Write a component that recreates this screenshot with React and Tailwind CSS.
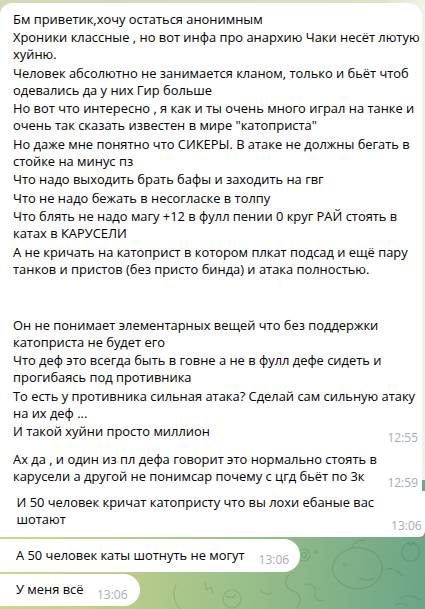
import React from 'react';

const FIRST = [
  ['Бм приветик,хочу остаться анонимным'],
  ['Хроники классные , но вот инфа про анархию Чаки несёт лютую', 'хуйню.'],
  ['Человек абсолютно не занимается кланом, только и бьёт чтоб', 'одевались да у них Гир больше'],
  ['Но вот что интересно , я как и ты очень много играл на танке и', 'очень так сказать известен в мире "катоприста"'],
  ['Но даже мне понятно что СИКЕРЫ. В атаке не должны бегать в', 'стойке на минус пз'],
  ['Что надо выходить брать бафы и заходить на гвг'],
  ['Что не надо бежать в несогласке в толпу'],
  ['Что блять не надо магу +12 в фулл пении 0 круг РАЙ стоять в', 'катах в КАРУСЕЛИ'],
  ['А не кричать на катоприст в котором плкат подсад и ещё пару', 'танков и пристов (без присто бинда) и атака полностью.'],
  [''],
  [''],
  ['Он не понимает элементарных вещей что без поддержки', 'катоприста не будет его'],
  ['Что деф это всегда быть в говне а не в фулл дефе сидеть и', 'прогибаясь под противника'],
  ['То есть у противника сильная атака? Сделай сам сильную атаку', 'на их деф ...'],
  ['И такой хуйни просто миллион'],
];

function Time({ children, className }) {
  return (
    <span className={`shrink-0 whitespace-nowrap text-[12px] leading-[17px] text-[#a3adb8] ${className}`}>
      {children}
    </span>
  );
}

// paragraphs of pre-wrapped lines; the time sits on the last line, pushed right
function Paragraphs({ paras, time, timeClass }) {
  return paras.map((lines, pi) => (
    <div key={pi} className={pi > 0 ? 'mt-[1.55px]' : ''}>
      {lines.map((line, li) => {
        const last = pi === paras.length - 1 && li === lines.length - 1;
        if (last) {
          return (
            <div key={li} className="flex items-start justify-between">
              <span className="h-[17px] whitespace-nowrap leading-[17px]">{line}</span>
              <Time className={timeClass}>{time}</Time>
            </div>
          );
        }
        return (
          <div key={li} className="h-[17px] whitespace-nowrap leading-[17px]">
            {line}
          </div>
        );
      })}
    </div>
  ));
}

function Doodles() {
  return (
    <svg
      className="pointer-events-none absolute inset-0"
      width="425"
      height="609"
      viewBox="0 0 425 609"
      fill="none"
      stroke="rgba(40,80,45,0.16)"
      strokeWidth="1.2"
      strokeLinecap="round"
      strokeLinejoin="round"
    >
      <circle cx="304" cy="555" r="6" />
      <circle cx="304" cy="555" r="2.5" />
      <circle cx="316" cy="552" r="1.2" />
      <path d="M333 565c4-14 22-22 38-14 10 5 14 16 9 26-6 12-25 15-36 8-8-5-13-12-11-20z" />
      <path d="M352 548c2-6 8-9 13-7" />
      <circle cx="345" cy="565" r="1.5" />
      <path d="M360 578c4 3 10 3 14 0" />
      <path d="M385 570c8-4 14 2 18 6" />
      <path d="M402 552c0-6 5-10 10-9 6 1 9 7 7 12-2 6-9 8-13 5-3-2-4-5-4-8z" />
      <path d="M408 543l3 3 3-4" />
      <path d="M289 575c-6 6-3 14 4 16s10 10 4 16" />
      <path d="M305 585c6-3 12 2 10 8-2 5 4 9 9 7" />
      <circle cx="232" cy="599" r="9" />
      <path d="M226 596c3 2 7 2 10-1" />
      <path d="M176 585c-4 8-2 18 4 24" />
      <path d="M205 582l2 8 4-3 2 6" />
      <path d="M400 598c6-4 14-3 20 2" />
      <path d="M395 605c4-2 9-2 13 1" />
      <path d="M260 590c3 4 8 5 12 3" />
    </svg>
  );
}

export default function App() {
  return (
    <div className="relative h-[609px] w-[425px] overflow-hidden bg-[linear-gradient(95deg,#d3d890_0%,#c2d08c_30%,#9cc08a_60%,#6ba587_100%)] font-['Open_Sans',sans-serif] text-[12.9px] text-black">
      <div className="absolute inset-x-0 top-0 h-[480px] bg-[linear-gradient(90deg,#d2d9b4_0%,#dde3c6_90%,#f1f3ea_100%)]" />
      <Doodles />
      <div className="relative flex flex-col pt-[3px]">
        <div className="w-[422px] rounded-tl-[12px] rounded-tr-[14px] bg-white pb-[0.4px] pl-[13px] pr-[4px] pt-[7.5px]">
          <Paragraphs paras={FIRST} time="12:55" timeClass="mt-[5.4px]" />
        </div>
        <div className="w-[422px] bg-white pl-[13px] pr-[4px] pt-[5.45px]">
          <Paragraphs
            paras={[
              [
                'Ах да , и один из пл дефа говорит это нормально стоять в',
                'карусели а другой не понимсар почему с цгд бьёт по 3к',
              ],
            ]}
            time="12:59"
            timeClass="mt-[5.4px]"
          />
        </div>
        <div className="w-[425px] rounded-br-[6px] bg-white pb-[2.85px] pl-[16.5px] pr-[3.3px] pt-[2.75px]">
          <Paragraphs
            paras={[['И 50 человек кричат катопристу что вы лохи ебаные вас', 'шотают']]}
            time="13:06"
            timeClass="mt-[6.4px]"
          />
        </div>
        <div className="mt-[2px] flex w-fit items-start rounded-r-[16px] bg-white pb-[3.6px] pl-[16px] pr-[11px] pt-[8px]">
          <span className="h-[17px] whitespace-nowrap leading-[17px]">А 50 человек каты шотнуть не могут</span>
          <Time className="ml-[14px] mt-[4.4px]">13:06</Time>
        </div>
        <div className="mt-[2px] flex w-fit items-start rounded-r-[16px] bg-white pb-[3px] pl-[16px] pr-[12px] pt-[7.5px]">
          <span className="h-[17px] whitespace-nowrap leading-[17px]">У меня всё</span>
          <Time className="ml-[13.5px] mt-[4.7px]">13:06</Time>
        </div>
      </div>
    </div>
  );
}
